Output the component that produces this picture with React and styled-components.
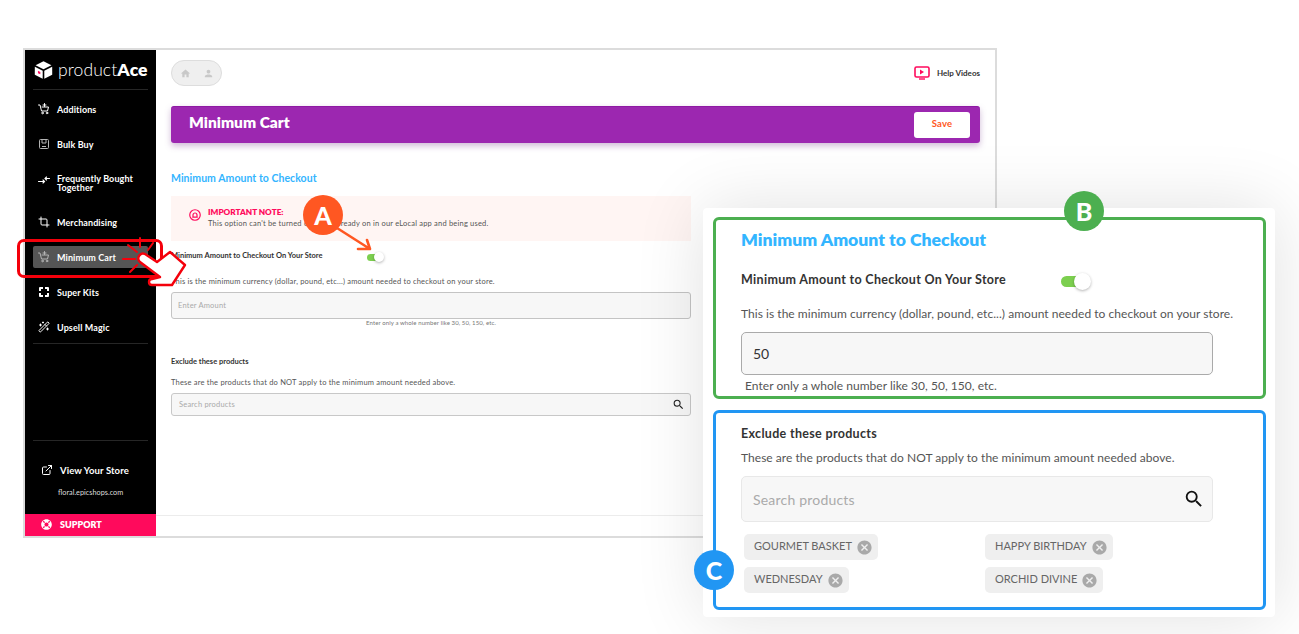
import React from 'react';
import styled, { createGlobalStyle } from 'styled-components';
import { Crop, ExternalLink, WandSparkles } from 'lucide-react';
import { MdHome, MdPerson, MdCancel, MdSearch } from 'react-icons/md';
import { FaLifeRing } from 'react-icons/fa';

const GlobalStyle = createGlobalStyle`
  html, body {
    margin: 0;
    background: #fff;
    font-family: "Lato", "Open Sans", sans-serif;
    overflow: hidden;
  }
  * { box-sizing: border-box; }
`;

const Page = styled.div`
  position: relative;
  width: 1299px;
  height: 634px;
  padding: 48px 0 0 23px;
  overflow: hidden;
`;

const AppWindow = styled.div`
  display: flex;
  width: 974px;
  height: 490px;
  border: 2px solid #dcdcdc;
  background: #fff;
`;

const Sidebar = styled.aside`
  display: flex;
  flex-direction: column;
  width: 131px;
  flex: none;
  background: #000;
  color: #fff;
`;

const LogoRow = styled.div`
  display: flex;
  align-items: center;
  gap: 5px;
  height: 40px;
  margin: 0 8px;
  padding-left: 1px;
  border-bottom: 1px solid #262626;
`;

const LogoText = styled.div`
  font-size: 17.5px;
  font-weight: 300;
  letter-spacing: 0.1px;
  b { font-weight: 800; }
`;

const Nav = styled.nav`
  display: flex;
  flex-direction: column;
  height: 254px;
  margin: 0 8px;
  padding-top: 1.5px;
  border-bottom: 1px solid #262626;
`;

const NavItem = styled.div`
  display: flex;
  align-items: center;
  gap: 7px;
  flex: none;
  height: ${p => (p.$tall ? 30 : 22)}px;
  margin: 6.5px 0;
  padding-left: 5px;
  border-radius: 2px;
  background: ${p => (p.$active ? '#555' : 'transparent')};
  font-size: 9px;
  font-weight: 700;
  line-height: 9px;
  letter-spacing: 0.1px;
  svg {
    width: 12px;
    height: 12px;
    flex: none;
    margin-top: ${p => (p.$tall ? -7 : 0)}px;
    color: ${p => (p.$dim ? '#b5b5b5' : '#fff')};
  }
`;

const StoreBlock = styled.div`
  margin: auto 8px 0;
  height: 74px;
  padding: 22px 0 0 8px;
  border-top: 1px solid #262626;
`;

const StoreLink = styled.div`
  display: flex;
  align-items: center;
  gap: 7px;
  height: 14px;
  font-size: 9.5px;
  font-weight: 700;
  letter-spacing: 0.1px;
`;

const StoreUrl = styled.div`
  margin: 11px 0 0 17px;
  font-size: 7.3px;
  line-height: 9px;
  color: #ddd;
`;

const SupportBar = styled.div`
  display: flex;
  align-items: center;
  gap: 8px;
  height: 22px;
  padding: 0 0 2px 16px;
  background: #ff0a5c;
  font-size: 9px;
  font-weight: 800;
`;

const Main = styled.main`
  display: flex;
  flex-direction: column;
  flex: 1;
  padding-top: 10px;
  color: #333;
`;

const MainInner = styled.div`
  padding: 0 15px;
`;

const Form = styled.div`
  width: 520px;
`;

const TopBar = styled.div`
  display: flex;
  align-items: center;
  justify-content: space-between;
  height: 26px;
`;

const Crumbs = styled.div`
  display: flex;
  align-items: center;
  gap: 12px;
  width: 51px;
  height: 26px;
  padding-left: 8px;
  border: 1.5px solid #ddd;
  border-radius: 13px;
  background: #efefef;
  color: #c8c8c8;
  font-size: 11px;
`;

const HelpLink = styled.div`
  display: flex;
  align-items: center;
  gap: 7px;
  font-size: 8px;
  font-weight: 700;
  color: #333;
`;

const Header = styled.div`
  display: flex;
  align-items: center;
  justify-content: space-between;
  height: 37px;
  margin-top: 20px;
  padding: 0 10px 0 18px;
  border-radius: 3px;
  background: #9c27b0;
  border-top: 1px solid #8e1aa3;
  box-shadow: 0 3px 6px rgba(120, 60, 140, 0.35);
  color: #fff;
  font-size: 15.5px;
  font-weight: 800;
`;

const HeaderTitle = styled.span`
  padding-bottom: 6px;
`;

const SaveButton = styled.button`
  width: 56px;
  height: 26px;
  padding: 0 0 3px;
  border: 0;
  border-radius: 3px;
  background: #fff;
  color: #ff5722;
  font: 700 9.5px "Lato", sans-serif;
  letter-spacing: 0.2px;
`;

const SectionTitle = styled.div`
  margin-top: 27px;
  font-size: 10.5px;
  line-height: 16px;
  font-weight: 700;
  letter-spacing: 0.05px;
  color: #33b5ff;
`;

const Note = styled.div`
  display: flex;
  align-items: center;
  gap: 7px;
  height: 45px;
  margin-top: 10px;
  padding-left: 18px;
  background: #fff5f3;
  > svg { margin-top: -8px; }
`;

const NoteTitle = styled.div`
  font-size: 8.2px;
  line-height: 11px;
  font-weight: 800;
  color: #ff0a5c;
`;

const NoteText = styled.div`
  font-size: 7.5px;
  line-height: 12px;
  letter-spacing: 0.2px;
  color: #555;
`;

const FieldRow = styled.div`
  display: flex;
  align-items: center;
  height: 16px;
  margin-top: 6px;
`;

const FieldLabel = styled.div`
  width: 196px;
  font-size: 7.5px;
  font-weight: 700;
  color: #333;
`;

const Toggle = styled.span`
  position: relative;
  display: block;
  width: ${p => p.$w}px;
  height: ${p => p.$h}px;
  border-radius: ${p => p.$h}px;
  background: #7ccf4f;
  top: 2px;
  &::after {
    content: '';
    position: absolute;
    right: ${p => -p.$knob / 3}px;
    top: ${p => (p.$h - p.$knob) / 2}px;
    width: ${p => p.$knob}px;
    height: ${p => p.$knob}px;
    border-radius: 50%;
    background: #fff;
    box-shadow: 0 1px 3px rgba(0, 0, 0, 0.3);
  }
`;

const Description = styled.div`
  margin-top: ${p => p.$top}px;
  font-size: 7.5px;
  line-height: 14px;
  letter-spacing: 0.2px;
  color: #555;
`;

const AmountInput = styled.div`
  display: flex;
  align-items: center;
  height: 27px;
  margin-top: 3px;
  padding-left: 6px;
  border: 1.5px solid #c4c4c4;
  border-radius: 3px;
  background: #f7f7f7;
  font-size: 7.5px;
  letter-spacing: 0.2px;
  color: #aaa;
`;

const Helper = styled.div`
  text-align: center;
  font-size: 6px;
  line-height: 8px;
  letter-spacing: 0.1px;
  color: #777;
`;

const SubLabel = styled.div`
  margin-top: 28px;
  font-size: 7.5px;
  line-height: 14px;
  font-weight: 700;
  color: #333;
`;

const SearchBox = styled.div`
  display: flex;
  align-items: center;
  justify-content: space-between;
  height: 23px;
  margin-top: 3px;
  padding: 0 5px 0 7px;
  border: 1px solid #c8c8c8;
  border-radius: 3px;
  background: #f7f7f7;
  font-size: 7.5px;
  letter-spacing: 0.2px;
  color: #aaa;
`;

const MainFooter = styled.div`
  height: 21px;
  margin-top: auto;
  border-top: 1px solid #ececec;
`;

const Card = styled.section`
  position: absolute;
  left: 703px;
  top: 208px;
  display: flex;
  flex-direction: column;
  gap: 11px;
  width: 572px;
  height: 409px;
  padding: 9px 9px 7px 10px;
  border-radius: 4px;
  background: #fff;
  box-shadow: 0 0 70px rgba(0, 0, 0, 0.12);
  color: #333;
`;

const CalloutBox = styled.div`
  height: ${p => p.$h}px;
  padding: ${p => p.$pad}px 0 0 25px;
  border: 3px solid ${p => p.$color};
  border-radius: 6px;
`;

const CardTitle = styled.div`
  font-size: 17.6px;
  line-height: 22px;
  font-weight: 800;
  color: #33b5ff;
`;

const CardRow = styled.div`
  display: flex;
  align-items: center;
  height: 18px;
  margin-top: 19px;
`;

const CardLabel = styled.div`
  width: 320px;
  font-size: 12.5px;
  font-weight: 700;
  letter-spacing: 0.32px;
  color: #333;
`;

const CardText = styled.div`
  margin-top: ${p => p.$top}px;
  font-size: 12px;
  line-height: 16px;
  letter-spacing: 0.04px;
  color: #555;
`;

const CardInput = styled.div`
  display: flex;
  align-items: center;
  width: 472px;
  height: 43px;
  margin-top: 10px;
  padding-left: 11px;
  border: 1.5px solid #aaa;
  border-radius: 5px;
  background: #f7f7f7;
  font-size: 14px;
  color: #333;
`;

const CardHelper = styled.div`
  margin: 4px 0 0 4px;
  font-size: 12px;
  line-height: 14px;
  letter-spacing: 0.04px;
  color: #555;
`;

const CardSubLabel = styled.div`
  font-size: 12.5px;
  line-height: 16px;
  font-weight: 700;
  letter-spacing: 0.32px;
  color: #333;
`;

const CardSearch = styled.div`
  display: flex;
  align-items: center;
  justify-content: space-between;
  width: 472px;
  height: 46px;
  margin-top: 10px;
  padding: 0 7px 0 11px;
  border: 1px solid #e8e8e8;
  border-radius: 5px;
  background: #f7f7f7;
  font-size: 14px;
  letter-spacing: 0.2px;
  color: #aaa;
`;

const ChipGrid = styled.div`
  display: grid;
  grid-template-columns: 241px 1fr;
  grid-auto-rows: 26px;
  gap: 7px 0;
  margin: 12px 0 0 3px;
  justify-items: start;
`;

const Chip = styled.div`
  display: flex;
  align-items: center;
  gap: 4px;
  height: 26px;
  padding: 0 5px 0 10px;
  border-radius: 5px;
  background: #efefef;
  font-size: 11px;
  color: #666;
  span { padding-bottom: 3px; }
  svg { color: #a9a9a9; width: 17px; height: 17px; }
`;

const Badge = styled.div`
  position: absolute;
  left: ${p => p.$x - 20}px;
  top: ${p => p.$y - 20}px;
  display: flex;
  align-items: center;
  justify-content: center;
  width: 40px;
  height: 40px;
  border-radius: 50%;
  background: ${p => p.$color};
  color: #fff;
  font-size: 25px;
  font-weight: 900;
`;

const Highlight = styled.div`
  position: absolute;
  left: 17px;
  top: 239px;
  width: 146px;
  height: 39px;
  border: 3px solid #f4000b;
  border-radius: 7px;
`;

const OverlaySvg = styled.svg`
  position: absolute;
  left: 0;
  top: 0;
  pointer-events: none;
`;

const CartIcon = ({ plus }) => (
  <svg viewBox="0 0 24 24" fill="none" stroke="currentColor" strokeWidth="2" strokeLinecap="round" strokeLinejoin="round">
    <path d="M1 4h3l3 12h12l2-8H8" />
    <circle cx="9" cy="20" r="1.6" />
    <circle cx="18" cy="20" r="1.6" />
    {plus && <path d="M13 1v6M10 4h6" />}
  </svg>
);

const BulkIcon = () => (
  <svg viewBox="0 0 24 24" fill="none" stroke="currentColor" strokeWidth="2">
    <rect x="3" y="3" width="18" height="18" rx="2" />
    <path d="M8 3v7h8V3M8 17h8" />
  </svg>
);

const TogetherIcon = () => (
  <svg viewBox="0 0 24 24" fill="none" stroke="currentColor" strokeWidth="2.2" strokeLinecap="round">
    <path d="M1 15h12M10 12l3 3-3 3M23 9h-9M17 6l-3 3 3 3" />
  </svg>
);

const KitsIcon = () => (
  <svg viewBox="0 0 24 24" fill="#fff">
    <path d="M4 2h6v4H6v4H2V4a2 2 0 0 1 2-2zM14 2h6a2 2 0 0 1 2 2v6h-4V6h-4zM2 14h4v4h4v4H4a2 2 0 0 1-2-2zM18 14h4v6a2 2 0 0 1-2 2h-6v-4h4z" />
  </svg>
);

const LogoCube = () => (
  <svg width="19" height="20" viewBox="0 0 24 24">
    <path d="M12 1l10 5-10 5L2 6z" fill="#fff" />
    <path d="M1 8l10 5v10L1 18z" fill="#fff" />
    <path d="M23 8l-10 5v10l10-5z" fill="#fff" />
    <path d="M5 13l3 1.5v3L5 16z" fill="#ff0a5c" />
  </svg>
);

const HelpIcon = () => (
  <svg width="16" height="14" viewBox="0 0 16 14" fill="none">
    <rect x="1" y="1" width="14" height="10" rx="1.5" stroke="#ff0a5c" strokeWidth="1.6" />
    <path d="M6 3.5l4 2.5-4 2.5z" fill="#ff0a5c" />
    <path d="M5 13h6" stroke="#ff0a5c" strokeWidth="1.4" />
  </svg>
);

const NoteIcon = () => (
  <svg width="12" height="12" viewBox="0 0 24 24" fill="none" stroke="#ff0a5c" strokeWidth="2.4">
    <circle cx="12" cy="12" r="10.5" />
    <path d="M8 16v-4a4 4 0 0 1 8 0v4zM6.5 16.5h11" />
  </svg>
);

const navItems = [
  { label: 'Additions', icon: <CartIcon plus /> },
  { label: 'Bulk Buy', icon: <BulkIcon />, dim: true },
  { label: <>Frequently Bought<br />Together</>, icon: <TogetherIcon />, tall: true },
  { label: 'Merchandising', icon: <Crop /> },
  { label: 'Minimum Cart', icon: <CartIcon plus />, active: true, dim: true },
  { label: 'Super Kits', icon: <KitsIcon /> },
  { label: 'Upsell Magic', icon: <WandSparkles /> },
];

const chips = ['GOURMET BASKET', 'HAPPY BIRTHDAY', 'WEDNESDAY', 'ORCHID DIVINE'];

export default function App() {
  return (
    <Page>
      <GlobalStyle />
      <AppWindow>
        <Sidebar>
          <LogoRow>
            <LogoCube />
            <LogoText>product<b>Ace</b></LogoText>
          </LogoRow>
          <Nav>
            {navItems.map((item, i) => (
              <NavItem key={i} $tall={item.tall} $active={item.active} $dim={item.dim}>
                {item.icon}
                <span>{item.label}</span>
              </NavItem>
            ))}
          </Nav>
          <StoreBlock>
            <StoreLink><ExternalLink size={12} />View Your Store</StoreLink>
            <StoreUrl>floral.epicshops.com</StoreUrl>
          </StoreBlock>
          <SupportBar><FaLifeRing size={11} />SUPPORT</SupportBar>
        </Sidebar>
        <Main>
          <MainInner>
            <TopBar>
              <Crumbs><MdHome /><MdPerson /></Crumbs>
              <HelpLink><HelpIcon />Help Videos</HelpLink>
            </TopBar>
            <Header>
              <HeaderTitle>Minimum Cart</HeaderTitle>
              <SaveButton>Save</SaveButton>
            </Header>
            <SectionTitle>Minimum Amount to Checkout</SectionTitle>
            <Form>
              <Note>
                <NoteIcon />
                <div>
                  <NoteTitle>IMPORTANT NOTE:</NoteTitle>
                  <NoteText>This option can't be turned off if it's already on in our eLocal app and being used.</NoteText>
                </div>
              </Note>
              <FieldRow>
                <FieldLabel>Minimum Amount to Checkout On Your Store</FieldLabel>
                <Toggle $w={14} $h={7} $knob={10} />
              </FieldRow>
              <Description $top={12}>This is the minimum currency (dollar, pound, etc...) amount needed to checkout on your store.</Description>
              <AmountInput>Enter Amount</AmountInput>
              <Helper>Enter only a whole number like 30, 50, 150, etc.</Helper>
              <SubLabel>Exclude these products</SubLabel>
              <Description $top={7}>These are the products that do NOT apply to the minimum amount needed above.</Description>
              <SearchBox>Search products<MdSearch size={13} color="#222" /></SearchBox>
            </Form>
          </MainInner>
          <MainFooter />
        </Main>
      </AppWindow>

      <Highlight />
      <OverlaySvg width="1299" height="634" viewBox="0 0 1299 634">
        <g stroke="#f4000b" strokeWidth="2" strokeLinecap="round">
          <path d="M123 259h12M128 245l9 7M140 238v9M153 243l-5 7M130 272l7-7" />
        </g>
        <path d="M140 262c-4-4 0-10 5-8l12 8 13-10 15 13-13 20h-20c-4 0-4-6 0-6l8-2z" fill="#fff" stroke="#f4000b" strokeWidth="2.4" strokeLinejoin="round" />
        <g stroke="#ff5722" strokeWidth="2.6" fill="none" strokeLinecap="round" strokeLinejoin="round">
          <path d="M337 228l33 21M367 240l3 9-12 0" />
        </g>
      </OverlaySvg>

      <Card>
        <CalloutBox $color="#4caf50" $h={182} $pad={9}>
          <CardTitle>Minimum Amount to Checkout</CardTitle>
          <CardRow>
            <CardLabel>Minimum Amount to Checkout On Your Store</CardLabel>
            <Toggle $w={24} $h={11} $knob={17} />
          </CardRow>
          <CardText $top={18}>This is the minimum currency (dollar, pound, etc...) amount needed to checkout on your store.</CardText>
          <CardInput>50</CardInput>
          <CardHelper>Enter only a whole number like 30, 50, 150, etc.</CardHelper>
        </CalloutBox>
        <CalloutBox $color="#2196f3" $h={200} $pad={13}>
          <CardSubLabel>Exclude these products</CardSubLabel>
          <CardText $top={8}>These are the products that do NOT apply to the minimum amount needed above.</CardText>
          <CardSearch>Search products<MdSearch size={22} color="#111" /></CardSearch>
          <ChipGrid>
            {chips.map(name => (
              <Chip key={name}><span>{name}</span><MdCancel /></Chip>
            ))}
          </ChipGrid>
        </CalloutBox>
      </Card>

      <Badge $x={323} $y={215} $color="#ff5722">A</Badge>
      <Badge $x={1084} $y={211} $color="#4caf50">B</Badge>
      <Badge $x={714} $y={570} $color="#2196f3">C</Badge>
    </Page>
  );
}
